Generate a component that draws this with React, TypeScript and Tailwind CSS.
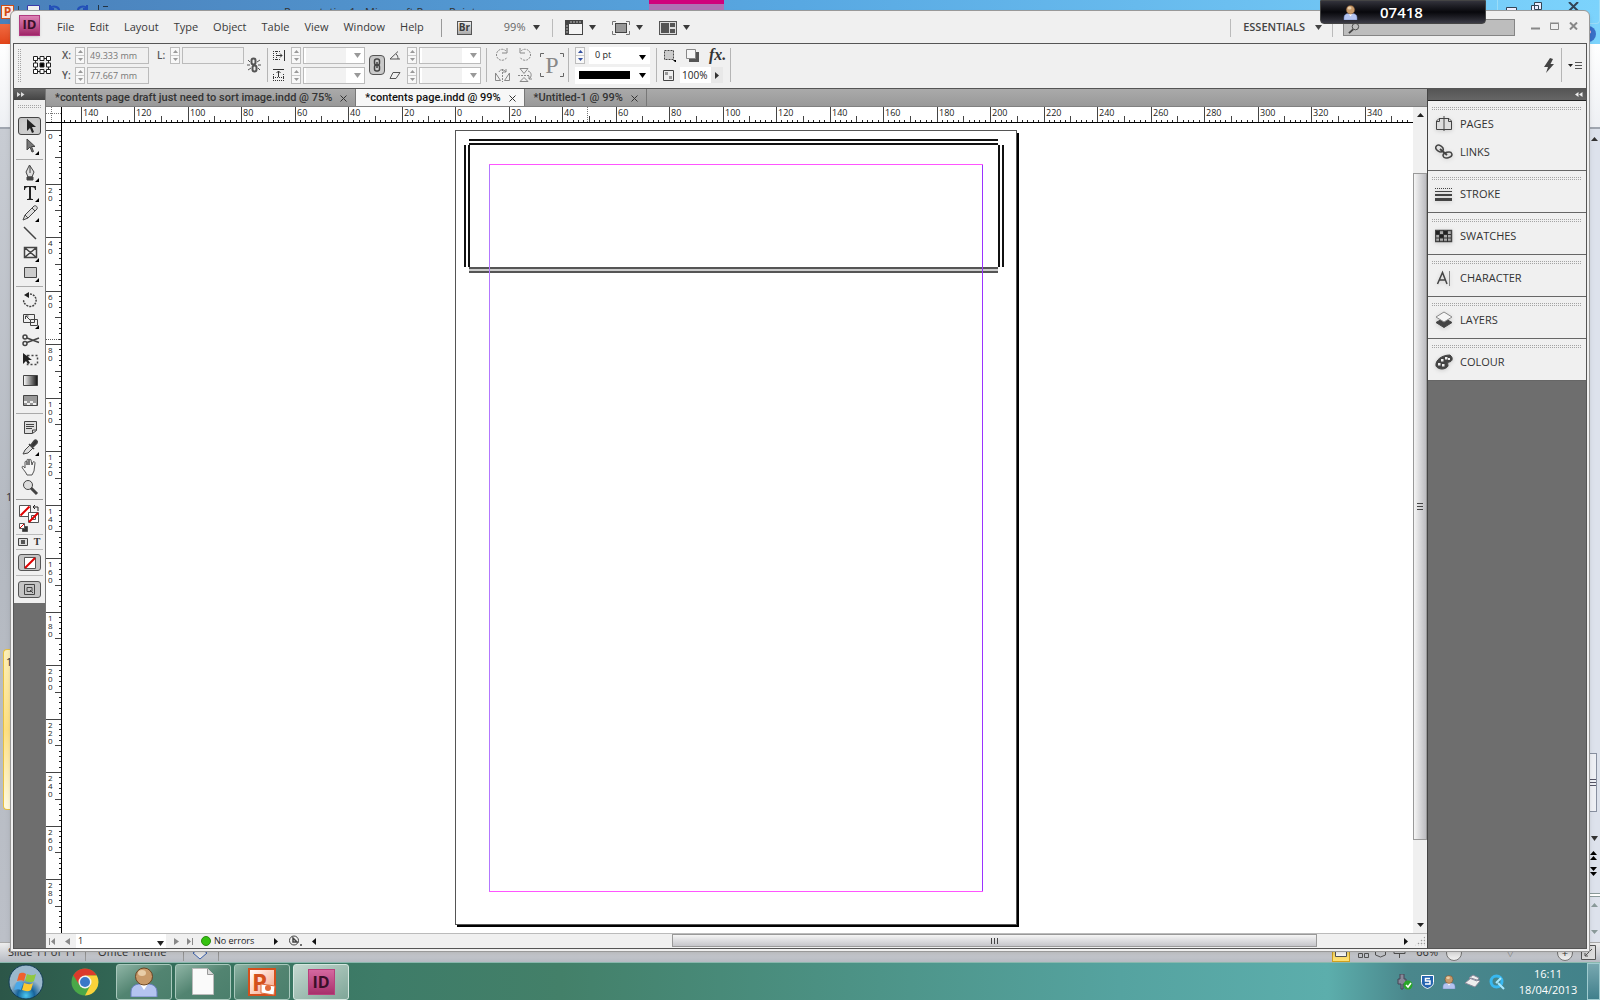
import type { ReactNode } from "react";

const menus = ["File", "Edit", "Layout", "Type", "Object", "Table", "View", "Window", "Help"];

const documents = [
  { name: "*contents page draft just need to sort image.indd @ 75%", active: false },
  { name: "*contents page.indd @ 99%", active: true },
  { name: "*Untitled-1 @ 99%", active: false },
];

// Distance between two labelled ruler marks (20 mm at 99%)
const STEP = 53.5;

const Caret = ({ className = "" }: { className?: string }) => (
  <svg width="7" height="5" viewBox="0 0 7 5" className={`shrink-0 ${className}`} fill="currentColor">
    <path d="M0 0h7L3.500 5z" />
  </svg>
);

const Grip = ({ className = "h-1" }: { className?: string }) => (
  <div className={`bg-[linear-gradient(#f0f0f0_1px,transparent_1px),linear-gradient(90deg,#a4a4a4_1px,transparent_1px)] bg-[length:2px_2px] ${className}`} />
);

const MenuBar = () => (
  <header className="flex h-8 shrink-0 items-center pl-1.5 pr-1 pt-px text-[#3a3a3a]">
    <div className="mb-1 flex h-[21px] w-[21px] shrink-0 items-center justify-center border border-[#b03a80] bg-gradient-to-b from-[#dd82b6] to-[#a02468] pb-0.5 text-[13px] font-bold text-[#3a1029] shadow">
      ID
    </div>
    <nav className="ml-[17px] flex gap-[15px] text-[11px]">
      {menus.map((m) => (
        <button key={m}>{m}</button>
      ))}
    </nav>
    <div className="ml-[17px] h-[18px] w-px bg-[#999]" />
    <button className="ml-[15px] flex h-[14px] w-[15px] items-center justify-center border border-[#555] bg-gradient-to-b from-[#eee] to-[#aaa] text-[10px] font-bold">
      Br
    </button>
    <button className="ml-8 flex items-center gap-[7px] text-[11px]">
      <span className="text-[#666]">99%</span> <Caret />
    </button>
    <div className="ml-3 h-[18px] w-px bg-[#bbb]" />
    <button className="ml-3 flex items-center gap-1.5" aria-label="View options">
      <svg width="18" height="15" viewBox="0 0 18 15">
        <rect x="0.5" y="0.5" width="17" height="14" fill="#f4f4f4" stroke="#444" />
        <path d="M0 0h18v4H4v11H0z" fill="#444" />
        <path d="M6 1v2M9 1v2M12 1v2M15 1v2M1 6h2M1 9h2M1 12h2" stroke="#bbb" />
      </svg>
      <Caret />
    </button>
    <button className="ml-4 flex items-center gap-1.5" aria-label="Screen mode">
      <svg width="18" height="14" viewBox="0 0 18 14" fill="none">
        <path d="M0.500 4V0.500H4M14 0.500h3.500V4M17.500 10v3.500H14M4 13.500H0.500V10" stroke="#777" />
        <rect x="3.500" y="2.500" width="11" height="9" fill="#999" stroke="#444" />
      </svg>
      <Caret />
    </button>
    <button className="ml-4 flex items-center gap-1.5" aria-label="Arrange documents">
      <svg width="18" height="14" viewBox="0 0 18 14">
        <rect x="0.5" y="0.5" width="17" height="13" fill="#ddd" stroke="#555" />
        <path d="M2 2h8v10H2zM11 2h5v4h-5zM11 8h5v4h-5z" fill="#555" />
      </svg>
      <Caret />
    </button>
    <div className="ml-auto h-[18px] w-px bg-[#bbb]" />
    <button className="ml-3 flex items-center gap-2.5 text-[11px] font-semibold text-[#444]">
      ESSENTIALS <Caret />
    </button>
    <div className="ml-2.5 h-[18px] w-px bg-[#bbb]" />
    <label className="ml-2.5 flex h-[17px] w-[172px] items-center border border-[#858585] bg-[#bdbdbd] pl-1">
      <svg width="13" height="12" viewBox="0 0 13 12" fill="none" stroke="#444">
        <circle cx="8" cy="4.500" r="3.500" />
        <path d="M5.500 7.500 1 11.500" strokeWidth="2" />
      </svg>
      <input aria-label="Search" className="w-full bg-transparent text-xs outline-none" />
    </label>
    <div className="ml-4 flex gap-2.5 pb-1 pr-[5px] text-[#888]">
      <button aria-label="Minimize">
        <svg width="9" height="8" stroke="currentColor"><path d="M0 6.500h9" strokeWidth="2" /></svg>
      </button>
      <button aria-label="Maximize">
        <svg width="9" height="8" stroke="currentColor" fill="none"><path d="M0.500 1.500h8v6h-8zM0 1h9" /></svg>
      </button>
      <button aria-label="Close">
        <svg width="9" height="8" stroke="currentColor" strokeWidth="2"><path d="M1 0.500 8 7.500M8 0.500 1 7.500" /></svg>
      </button>
    </div>
  </header>
);

const Spinner = ({ label, blue }: { label: string; blue?: boolean }) => (
  <div className={`flex h-[17px] w-[10px] shrink-0 flex-col border border-[#bdbdbd] bg-[#f8f8f8] ${blue ? "text-[#3350a0]" : "text-[#999]"}`}>
    <button aria-label={`Increase ${label}`} className="flex flex-1 items-center justify-center border-b border-[#ccc]">
      <svg width="5" height="3" fill="currentColor"><path d="M0 3h5L2.500 0z" /></svg>
    </button>
    <button aria-label={`Decrease ${label}`} className="flex flex-1 items-center justify-center">
      <svg width="5" height="3" fill="currentColor"><path d="M0 0h5L2.500 3z" /></svg>
    </button>
  </div>
);

const Field = ({ id, label, value }: { id: string; label: string; value: string }) => (
  <div className="flex items-center gap-0.5">
    <label htmlFor={id} className="w-[11px] text-[10px] font-semibold text-[#555]">{label}</label>
    <Spinner label={id} />
    <input
      id={id}
      defaultValue={value}
      className="h-[17px] w-[62px] border border-[#bbb] bg-[#f0f0f0] px-0.5 text-[9px] text-[#777] outline-none"
    />
  </div>
);

const Combo = ({ label }: { label: string }) => (
  <div className="flex items-center gap-0.5">
    <Spinner label={label} />
    <div className="relative">
      <select aria-label={label} className="block h-[17px] w-[62px] appearance-none border border-[#bbb] bg-[linear-gradient(90deg,#fff_2px,#f2f2f2_2px,#f2f2f2_42px,#fff_42px)]" />
      <Caret className="pointer-events-none absolute right-1 top-1.5 text-[#999]" />
    </div>
  </div>
);

const Divider = () => <div className="h-[34px] w-px shrink-0 bg-[#b5b5b5]" />;

const ControlBar = () => (
  <div className="flex h-[45px] shrink-0 items-center border-b border-[#555] pb-0.5 pl-1 pr-1">
    <Grip className="h-[34px] w-1" />
    <svg width="18" height="18" viewBox="0 0 18 18" className="ml-[11px] shrink-0" fill="#fff" stroke="#222">
      <path d="M2 2.500h14M2 15.500h14M2.500 2v14M15.500 2v14" />
      <path d="M0.500 0.500h4v4h-4zM7 0.500h4v4H7zM13.500 0.500h4v4h-4zM0.500 7h4v4h-4zM13.500 7h4v4h-4zM0.500 13.500h4v4h-4zM7 13.500h4v4H7zM13.500 13.500h4v4h-4z" />
      <path d="M7 7h4v4H7z" fill="#000" />
    </svg>
    <div className="ml-[11px] flex flex-col gap-[3px]">
      <Field id="X" label="X:" value="49.333 mm" />
      <Field id="Y" label="Y:" value="77.667 mm" />
    </div>
    <div className="ml-2 flex h-[37px] items-start">
      <Field id="L" label="L:" value="" />
    </div>
    <svg width="14" height="16" viewBox="0 0 14 16" className="ml-[3px] shrink-0" fill="none" stroke="#555">
      <rect x="4.500" y="1.500" width="4" height="6" rx="2" strokeWidth="2" />
      <rect x="5.500" y="8.500" width="4" height="6" rx="2" strokeWidth="2" />
      <path d="M1 3l2 2M13 3l-3 2M0 8h3M11 8h3M1 13l3-2M13 13l-2-2" />
    </svg>
    <div className="ml-1.5"><Divider /></div>
    <div className="ml-1 flex flex-col gap-[7px]">
      <svg width="13" height="13" viewBox="0 0 13 13" fill="none" stroke="#333">
        <path d="M1 2.500h7M1 10.500h7M1.500 2v9M4.500 2v9" strokeDasharray="1 1" />
        <path d="M12.500 1v11M5 6.500h5M8 4.500l2 2-2 2" />
      </svg>
      <svg width="13" height="13" viewBox="0 0 13 13" fill="none" stroke="#333">
        <path d="M1 8.500h11M1 11.500h11M1.500 5v8M11.500 5v8" strokeDasharray="1 1" />
        <path d="M1 0.500h11M6.500 8V2M4.500 4l2-2 2 2" />
      </svg>
    </div>
    <div className="ml-1.5 flex flex-col gap-[3px]">
      <Combo label="Scale X" />
      <Combo label="Scale Y" />
    </div>
    <button aria-label="Constrain proportions" className="ml-1 flex h-5 w-4 items-center justify-center rounded-sm border border-[#555] bg-[#ccc] shadow-inner">
      <svg width="8" height="14" viewBox="0 0 8 14" fill="none" stroke="#444" strokeWidth="1.500">
        <rect x="1.500" y="1" width="5" height="6" rx="2" />
        <rect x="1.500" y="7" width="5" height="6" rx="2" />
        <path d="M4 4v6" />
      </svg>
    </button>
    <div className="ml-1 flex flex-col gap-[11px]">
      <svg width="12" height="9" fill="none" stroke="#555"><path d="M9 0.500 1 8h10M7 3c1.500 1 2 3 2 5" /></svg>
      <svg width="12" height="9" fill="none" stroke="#555"><path d="M4 1.500h7L7 7.500H1z" /></svg>
    </div>
    <div className="ml-1.5 flex flex-col gap-[3px]">
      <Combo label="Rotation" />
      <Combo label="Shear" />
    </div>
    <div className="ml-[5px]"><Divider /></div>
    <div className="ml-2 grid grid-cols-2 gap-x-2 gap-y-1.5">
      <button aria-label="Rotate 90 clockwise">
        <svg width="14" height="14" fill="none" stroke="#888"><path d="M11 3A5.500 5.500 0 1 0 12 9" strokeDasharray="2 1" /><path d="M12 0v5H7" /></svg>
      </button>
      <button aria-label="Rotate 90 anticlockwise">
        <svg width="14" height="14" fill="none" stroke="#888"><path d="M3 3A5.500 5.500 0 1 1 2 9" strokeDasharray="2 1" /><path d="M2 0v5h5" /></svg>
      </button>
      <button aria-label="Flip horizontal">
        <svg width="15" height="14" fill="none" stroke="#888"><path d="M7.500 1v13" strokeDasharray="2 1" /><path d="M0.500 12.500V5l5 7.500zM14.500 12.500V5l-5 7.500zM4 4c1-3 5-3 7 0M11 1v3H8" /></svg>
      </button>
      <button aria-label="Flip vertical">
        <svg width="15" height="14" fill="none" stroke="#888"><path d="M0 7.500h12" strokeDasharray="2 1" /><path d="M2 0.500h8L6 5.500zM2 13.500h8L6 9.500zM10 3c4 1 4 6 1 8M11 8v3h3" /></svg>
      </button>
    </div>
    <div className="relative ml-[7px] h-6 w-6 text-center font-['Liberation_Serif',serif] text-2xl leading-6 text-[#888]">
      P
      <svg width="24" height="24" className="absolute inset-0" fill="none" stroke="#666"><path d="M0.500 4V0.500H4M20 0.500h3.500V4M23.500 20v3.500H20M4 23.500H0.500V20" /></svg>
    </div>
    <div className="ml-1"><Divider /></div>
    <div className="ml-1.5 flex flex-col gap-[3px]">
      <div className="flex items-center gap-1">
        <Spinner label="stroke weight" blue />
        <div className="relative">
          <select aria-label="Stroke weight" className="block h-[17px] w-[61px] appearance-none bg-white pl-1.5 text-[9px] text-[#222]">
            <option>0 pt</option>
          </select>
          <Caret className="pointer-events-none absolute right-1 top-2" />
        </div>
      </div>
      <button aria-label="Stroke type" className="flex h-[17px] w-[75px] items-center gap-[9px] bg-white pl-1">
        <span className="h-2 w-[51px] bg-black" />
        <Caret />
      </button>
    </div>
    <div className="ml-1.5"><Divider /></div>
    <div className="ml-1.5 flex flex-col gap-1">
      <div className="flex h-4 items-center gap-2.5">
        <svg width="13" height="13" fill="#ccc" stroke="#444"><path d="M1.500 1.500h9v9h-9z" strokeDasharray="2 1" /><path d="M10 11h3v2h-1z" fill="#000" stroke="none" /></svg>
        <svg width="13" height="13"><path d="M3 3h10v10H3z" fill="#555" /><path d="M0.500 0.500h9v9h-9z" fill="#f6f6f6" stroke="#888" /></svg>
        <button className="font-['Liberation_Serif',serif] text-base font-bold italic leading-4 text-[#333]">fx.</button>
      </div>
      <div className="flex h-4 items-center">
        <svg width="11" height="11"><path d="M0.500 0.500h10v10h-10z" fill="#eee" stroke="#444" /><path d="M2 2h3v3H2zM6 6h3v3H6z" fill="#999" /></svg>
        <input aria-label="Opacity" defaultValue="100%" className="ml-1.5 h-4 w-[31px] bg-white px-0.5 text-[10px] text-[#222] outline-none" />
        <button aria-label="Opacity slider" className="flex h-4 w-3 items-center justify-center bg-[#e8e8e8]">
          <svg width="4" height="7"><path d="M0 0v7l4-3.500z" fill="#333" /></svg>
        </button>
      </div>
    </div>
    <div className="ml-1"><Divider /></div>
    <button aria-label="Quick apply" className="ml-auto">
      <svg width="11" height="15" fill="#444"><path d="M6 0 0 9h4L2 15l8-9H6.500L9 1z" /></svg>
    </button>
    <div className="ml-1.5"><Divider /></div>
    <button aria-label="Panel menu" className="ml-1.5 flex items-center">
      <svg width="14" height="9"><path d="M0 3h5L2.500 6z" fill="#222" /><path d="M7 1.500h7M7 4.500h7M7 7.500h7" stroke="#555" /></svg>
    </button>
  </div>
);

const Corner = () => <path d="M19 15v4h-4z" fill="#000" stroke="none" />;

const Tool = ({ name, children, pressed }: { name: string; children: ReactNode; pressed?: boolean }) => (
  <button
    aria-label={name}
    className={`mx-auto flex w-[23px] items-center justify-center ${pressed ? "my-px h-[18px] rounded-[3px] border border-[#444] bg-[#ccc] shadow-inner" : "h-5"}`}
  >
    <svg width="20" height="20" viewBox="0 0 20 20" className="shrink-0" fill="none" stroke="#444">
      {children}
    </svg>
  </button>
);

const ToolRule = () => (
  <div className="flex h-[7px] items-center px-0.5">
    <div className="h-px w-full bg-[#aaa]" />
  </div>
);

const Toolbox = () => (
  <aside className="flex w-8 shrink-0 flex-col border-r border-[#777] bg-[#6e6e6e]">
    <button aria-label="Expand tools" className="flex h-[11px] shrink-0 items-center bg-gradient-to-b from-[#666] to-[#444] pl-[3px]">
      <svg width="8" height="5" fill="#ddd"><path d="M0 0l3.500 2.500L0 5zM4 0l3.500 2.500L4 5z" /></svg>
    </button>
    <div className="flex flex-col bg-[#f0f0f0]">
      <div className="px-1 pb-2 pt-1"><Grip /></div>
      <Tool name="Selection" pressed><path d="M7 3v12l3-3 2 5 2-1-2-5h4z" fill="#222" stroke="none" /></Tool>
      <Tool name="Direct selection"><path d="M7 3v11l3-3 2 5 1.500-.5-2-5h3.500z" fill="#777" /><Corner /></Tool>
      <ToolRule />
      <Tool name="Pen"><path d="M9.500 2 6 9l2 5h4l2-5zM10 3v7" fill="#ddd" /><path d="M7 14h6v3H7z" fill="#444" /><Corner /></Tool>
      <Tool name="Type"><path d="M4 3h12v4h-1c0-2-1-3-4-3v11c0 1 1 1 2 1v1H7v-1c1 0 2 0 2-1V4C6 4 5 5 5 7H4z" fill="#222" stroke="none" /><Corner /></Tool>
      <Tool name="Pencil"><path d="M3 17l2-5 9-9c2-1 4 1 3 3l-9 9zM5 12l3 3M12 5l3 3" fill="#ddd" /><Corner /></Tool>
      <Tool name="Line"><path d="M4 4l12 12" strokeWidth="1.500" /></Tool>
      <Tool name="Rectangle frame"><path d="M4.500 4.500h12v10h-12zM4.500 4.500l12 10M16.500 4.500l-12 10" strokeWidth="1.500" /><Corner /></Tool>
      <Tool name="Rectangle"><path d="M4.500 4.500h12v10h-12z" fill="#ccc" /><Corner /></Tool>
      <ToolRule />
      <Tool name="Rotate"><path d="M7 4.500c5-2 10 2 9 7s-6 6-9 4-4-4-3-6" strokeWidth="1.500" strokeDasharray="2 1" /><path d="M4 5l5-3v6z" fill="#222" stroke="none" /></Tool>
      <Tool name="Scale"><path d="M3.500 4.500h11v8h-11zM10.500 9.500h7v6h-7z" /><path d="M6 6l5 5M5.500 9V6h3" /><Corner /></Tool>
      <Tool name="Scissors"><circle cx="5" cy="7" r="2" strokeWidth="1.500" /><circle cx="5" cy="13.500" r="2" strokeWidth="1.500" /><path d="M7 8l12 4.500M7 12.500 19 8" strokeWidth="1.500" /></Tool>
      <Tool name="Free transform"><path d="M7.500 5.500h10v9h-10z" strokeDasharray="2 2" strokeWidth="1.500" /><path d="M3 3v11l3-3 2 3 2-1-2-3h4z" fill="#222" stroke="none" /></Tool>
      <Tool name="Gradient swatch">
        <defs><linearGradient id="swatch"><stop stopColor="#fff" /><stop offset="1" stopColor="#111" /></linearGradient></defs>
        <path d="M3.500 5.500h14v10h-14z" fill="url(#swatch)" />
      </Tool>
      <Tool name="Gradient feather"><path d="M3.500 5.500h14v10h-14z" fill="#999" /><path d="M4 11h3v2H4zM10 11h3v2h-3zM7 13h3v2H7zM13 13h3v2h-3z" fill="#eee" stroke="none" /></Tool>
      <ToolRule />
      <Tool name="Note"><path d="M4.500 4.500h12v9l-4 3h-8z" fill="#ddd" /><path d="M6 7.500h8M6 9.500h8M6 11.500h6M12.500 16v-3h4" /></Tool>
      <Tool name="Eyedropper"><path d="M3 17l2-4 5-5 3 3-5 5z" fill="#ddd" /><path d="M9 7l5 5M11 8l3-4c2-2 4 0 3 2l-4 4z" fill="#333" strokeWidth="1.500" /><Corner /></Tool>
      <Tool name="Hand"><path d="M6 16c-2-3-4-5-4-6s2-1 3 1V5c0-1 2-1 2 0v3-5c0-1 2-1 2 0v5-5c0-1 2-1 2 0l1 5 1-3c1-1 2 0 2 1l-1 8-2 4H7z" fill="#f4f4f4" stroke="#555" /></Tool>
      <Tool name="Zoom"><circle cx="8" cy="8" r="4.500" fill="#ddd" /><path d="M11 11l6 6" strokeWidth="3" /></Tool>
      <div className="mx-0.5 mt-0.5 h-px bg-[#999]" />
      <svg width="30" height="34" viewBox="0 0 30 34" fill="#fff" stroke="#555">
        <path d="M5.500 5.500h11v11h-11z" />
        <path d="M6.500 15.500l9-9" stroke="#e00000" strokeWidth="2" />
        <path d="M14.500 12.500h10v10h-10zM17.500 15.500h4v4h-4z" />
        <path d="M15 22l9-9" stroke="#e00000" strokeWidth="2" />
        <path d="M20 7h4v4M21 5l-2 2 2 2" fill="none" stroke="#222" />
        <path d="M8.500 26.500h5v5h-5z" fill="#333" />
        <path d="M5.500 23.500h5v5h-5z" />
        <path d="M6 28l4-4" stroke="#e00000" />
      </svg>
      <div className="mx-0.5 h-px bg-[#bbb]" />
      <div className="flex h-[14px] items-center justify-center gap-1">
        <button aria-label="Formatting affects container"><svg width="11" height="8"><path d="M0.500 0.500h9v7h-9z" fill="#ddd" stroke="#444" /><path d="M3 2h4v4H3z" fill="#555" /></svg></button>
        <button className="w-2 font-['Liberation_Serif',serif] text-[10px] font-bold leading-3 text-[#333]">T</button>
      </div>
      <div className="mx-0.5 h-px bg-[#bbb]" />
      <button aria-label="Apply none" className="mx-auto my-1 flex h-[17px] w-[23px] items-center justify-center rounded-[3px] border border-[#555] bg-[#c4c4c4]">
        <svg width="12" height="12"><path d="M0.500 0.500h11v11h-11z" fill="#fff" stroke="#555" /><path d="M1 11 11 1" stroke="#e00000" strokeWidth="2" /></svg>
      </button>
      <div className="mx-0.5 h-px bg-[#bbb]" />
      <button aria-label="Normal view mode" className="mx-auto mb-[5px] mt-[5px] flex h-[17px] w-[23px] items-center justify-center rounded-[3px] border border-[#555] bg-[#c4c4c4]">
        <svg width="11" height="11" fill="none" stroke="#444"><path d="M0.500 0.500h10v10h-10zM3 3.500h5v4H3zM6 6l3 3" /></svg>
      </button>
    </div>
  </aside>
);

const steps = (from: number, to: number) => Array.from({ length: to - from + 1 }, (_, i) => from + i);

const tickLength = (i: number) => (i % 10 === 0 ? 15 : i % 5 === 0 ? 6 : 2);

const HorizontalRuler = () => (
  <svg className="h-4 min-w-0 flex-1 bg-white" shapeRendering="crispEdges">
    {steps(-73, 178).map((i) => {
      const x = Math.round(393 + (i * STEP) / 10);
      return <path key={i} d={`M${x}.5 ${15 - tickLength(i)}V15`} stroke={i % 5 === 0 ? "#444" : "#222"} />;
    })}
    {steps(-7, 17).map((i) => (
      <text key={i} x={Math.round(395 + i * STEP)} y="9" className="text-[9px]" fill="#222">
        {Math.abs(i * 20)}
      </text>
    ))}
    <path d="M525.5 0v15" stroke="#777" strokeDasharray="1 1" />
    <path d="M0 15.500h3000" stroke="#000" />
  </svg>
);

const VerticalRuler = () => (
  <svg className="h-full w-4 shrink-0 bg-white" shapeRendering="crispEdges">
    {steps(0, 151).map((i) => {
      const y = Math.round(7 + (i * STEP) / 10);
      return <path key={i} d={`M${15 - tickLength(i)} ${y}.5H15`} stroke={i % 5 === 0 ? "#444" : "#222"} />;
    })}
    {steps(0, 14).map((i) =>
      String(i * 20).split("").map((digit, n) => (
        <text key={`${i}-${n}`} x="2" y={Math.round(16 + i * STEP + n * 8)} className="text-[8px]" fill="#222">
          {digit}
        </text>
      ))
    )}
    <path d="M0 216.500h15" stroke="#555" strokeDasharray="1 1" />
    <path d="M15.500 0v3000" stroke="#000" />
  </svg>
);

const Artboard = () => (
  <svg className="h-full min-w-0 flex-1 bg-white" shapeRendering="crispEdges" fill="none">
    <path d="M395 803h562M956 10v794" stroke="#000" strokeWidth="2" />
    <path d="M393.500 7.500h561v794h-561z" fill="#fff" stroke="#555" />
    {/* Double line masthead frame */}
    <path d="M407 17h529M407 21h529M403 22v122M407 22v122M937 22v122M941 22v122" stroke="#111" strokeWidth="2" />
    <path d="M407 145h529M407 149h529" stroke="#555" strokeWidth="2" />
    <path d="M407 147h529" stroke="#ccc" strokeWidth="2" />
    {/* Margin guides */}
    <path d="M427 41.500h494M427 768.500h494" stroke="#ff55ff" />
    <path d="M427.500 42v726" stroke="#b377ff" />
    <path d="M920.500 42v726" stroke="#9933ff" />
  </svg>
);

const StatusBar = () => (
  <footer className="flex h-[15px] shrink-0 items-center border-t border-[#bbb] bg-[#f0f0f0] text-[9px] text-[#222]">
    <button aria-label="First page" className="ml-[3px]"><svg width="6" height="7" fill="#888"><path d="M0 0h1v7H0zM6 0v7L2 3.500z" /></svg></button>
    <button aria-label="Previous page" className="ml-2.5"><svg width="5" height="7" fill="#888"><path d="M5 0v7L0 3.500z" /></svg></button>
    <div className="relative ml-1.5">
      <select aria-label="Page" className="block h-[14px] w-[90px] appearance-none bg-white pl-0.5">
        <option>1</option>
      </select>
      <Caret className="pointer-events-none absolute bottom-0.5 right-0.5" />
    </div>
    <button aria-label="Next page" className="ml-2"><svg width="5" height="7" fill="#888"><path d="M0 0v7l5-3.500z" /></svg></button>
    <button aria-label="Last page" className="ml-2"><svg width="6" height="7" fill="#888"><path d="M0 0v7l4-3.500zM5 0h1v7H5z" /></svg></button>
    <span className="ml-2 h-2.5 w-2.5 rounded-full border border-[#2a8a10] bg-[#35c210]" />
    <button className="ml-[3px] w-[60px] text-left">No errors</button>
    <svg width="4" height="7"><path d="M0 0v7l4-3.500z" fill="#111" /></svg>
    <svg width="14" height="12" className="ml-2.5" fill="none" stroke="#444"><circle cx="6" cy="5.500" r="4.500" /><path d="M5 3v4h4l-4-4zM12 10h2" strokeWidth="1.500" /></svg>
    <button aria-label="Scroll left" className="ml-1 flex h-full w-4 items-center justify-center">
      <svg width="4" height="7"><path d="M4 0v7L0 3.500z" fill="#111" /></svg>
    </button>
    <div className="flex h-full flex-1">
      <div className="flex-[350]" />
      <div className="flex h-[13px] flex-[643] items-center justify-center gap-0.5 border border-[#999] bg-gradient-to-b from-[#f5f5f5] to-[#c5c5ca]">
        <i className="h-1.5 w-px bg-[#444]" />
        <i className="h-1.5 w-px bg-[#444]" />
        <i className="h-1.5 w-px bg-[#444]" />
      </div>
      <div className="flex-[81]" />
    </div>
    <button aria-label="Scroll right" className="flex h-full w-4 items-center justify-center">
      <svg width="4" height="7"><path d="M0 0v7l4-3.500z" fill="#111" /></svg>
    </button>
    <div className="mr-0.5 h-[10px] w-[11px] bg-[radial-gradient(#999_35%,transparent_50%)] bg-[length:3px_3px] [clip-path:polygon(100%_0,100%_100%,0_100%)]" />
  </footer>
);

const VerticalScroll = () => (
  <div className="flex w-[14px] shrink-0 flex-col bg-[#f0f0f0]">
    <button aria-label="Scroll up" className="flex h-4 items-center justify-center"><svg width="7" height="4"><path d="M0 4h7L3.500 0z" fill="#222" /></svg></button>
    <div className="flex flex-1 flex-col">
      <div className="flex-[50]" />
      <div className="flex flex-[668] flex-col items-center justify-center gap-0.5 border border-[#999] bg-gradient-to-r from-[#f5f5f5] to-[#bcbcc0]">
        <i className="h-px w-1.5 bg-[#444]" />
        <i className="h-px w-1.5 bg-[#444]" />
        <i className="h-px w-1.5 bg-[#444]" />
      </div>
      <div className="flex-[77]" />
    </div>
    <button aria-label="Scroll down" className="flex h-4 items-center justify-center"><svg width="7" height="4"><path d="M0 0h7L3.500 4z" fill="#222" /></svg></button>
  </div>
);

const DocumentArea = () => (
  <main className="flex min-w-0 flex-1 flex-col">
    <div className="flex h-[18px] shrink-0 border-b border-[#808080] bg-gradient-to-b from-[#aaa] to-[#999] font-['Roboto',sans-serif] text-[11px] font-medium text-[#333]">
      {documents.map((doc) => (
        <div
          key={doc.name}
          className={`flex items-center gap-2 border-r border-[#777] pl-[9px] pr-2 pt-0.5 ${doc.active ? "bg-[#f7f7f7] text-[#111]" : ""}`}
        >
          <button className="whitespace-nowrap">{doc.name}</button>
          <button aria-label={`Close ${doc.name}`}>
            <svg width="7" height="7" stroke="#333"><path d="M0.500 0.500l6 6M6.500 0.500l-6 6" /></svg>
          </button>
        </div>
      ))}
    </div>
    <div className="flex min-h-0 flex-1">
      <div className="flex min-w-0 flex-1 flex-col">
        <div className="flex shrink-0">
          <svg width="16" height="16" className="shrink-0 bg-white" stroke="#777"><path d="M0 6.500h15M5.500 0v15" strokeDasharray="1 1" /><path d="M15.500 0v16M0 15.500h16" stroke="#000" /></svg>
          <HorizontalRuler />
        </div>
        <div className="flex min-h-0 flex-1">
          <VerticalRuler />
          <Artboard />
        </div>
      </div>
      <VerticalScroll />
    </div>
    <StatusBar />
  </main>
);

const panelGroups: { name: string; icon: ReactNode }[][] = [
  [
    { name: "PAGES", icon: <path d="M9 1v15M9 3.500H4L1.500 6v8.500H9M9 3.500h5L16.500 6v8.500H9M4.500 3.500v3h-3M13.500 3.500v3h3" fill="#ddd" /> },
    { name: "LINKS", icon: <g strokeWidth="1.500"><ellipse cx="4.500" cy="5.500" rx="4" ry="2.800" transform="rotate(35 4.500 5.500)" /><ellipse cx="12.500" cy="12" rx="4.500" ry="2.800" transform="rotate(-15 12.500 12)" /><path d="M5 6l7 6" strokeWidth="2" /></g> },
  ],
  [{ name: "STROKE", icon: <g><path d="M0 3.500h17" strokeDasharray="1 1" /><path d="M0 6.500h17" /><path d="M0 10h17" strokeWidth="2" /><path d="M0 14.500h17" strokeWidth="3" /></g> }],
  [{ name: "SWATCHES", icon: <g><path d="M0.500 3.500h16v11h-16z" fill="#aaa" strokeWidth="1.500" /><path d="M1 4h4v4H1zM9 4h4v4H9zM5 8h4v3H5z" fill="#222" stroke="none" /><path d="M1 7.500h15M1 11h15M4.500 3v12M8.500 3v12M12.500 3v12" stroke="#333" /></g> }],
  [{ name: "CHARACTER", icon: <g><path d="M2.500 15 7.500 3.500l4.500 11.500M4.500 11h6" strokeWidth="1.500" /><path d="M14.500 2v15" stroke="#888" /></g> }],
  [{ name: "LAYERS", icon: <g><path d="M9 7l8 4.500-8 5-8-5z" fill="#444" /><path d="M9 1l8 5-8 5-8-5z" fill="#f5f5f5" stroke="#888" /></g> }],
  [{ name: "COLOUR", icon: <g><path d="M15 2c4 3 2 7-1 7-2 0-1 2-1 4-2 4-10 4-12 0C0 7 7 2 15 2z" fill="#444" /><path d="M6 6h2.500v2.500H6zM10 4h2.500v2.500H10zM3 10h2.500v2.500H3zM7 11h2.500v2.500H7zM13 5h2v2h-2z" fill="#eee" stroke="none" /></g> }],
];

const PanelDock = () => (
  <aside className="flex w-[159px] shrink-0 flex-col border-l border-[#444] bg-[#6e6e6e]">
    <button aria-label="Collapse panels" className="flex h-3 shrink-0 items-center justify-end border-b border-[#222] bg-gradient-to-b from-[#555] to-[#666] pr-[3px]">
      <svg width="8" height="5" fill="#eee"><path d="M3.500 0v5L0 2.500zM7.500 0v5L4 2.500z" /></svg>
    </button>
    {panelGroups.map((group) => (
      <section key={group[0].name} className="border-b border-[#666] bg-[#f0f0f0] px-1 pb-1 pt-[5px]">
        <Grip />
        {group.map((panel) => (
          <button key={panel.name} className="flex h-7 w-full items-center gap-[7px] pl-[3px] text-[11px] font-medium text-[#333]">
            <svg width="18" height="18" viewBox="0 0 18 18" fill="none" stroke="#444" className="drop-shadow-sm">{panel.icon}</svg>
            {panel.name}
          </button>
        ))}
      </section>
    ))}
  </aside>
);

const Presentation = () => (
  <div className="flex min-h-0 flex-1 flex-col bg-[#dde2eb] text-[#333]">
    <div className="flex h-6 shrink-0 items-center bg-gradient-to-r from-[#4a80ba] via-[#58a8e2] to-[#7cd3fc] text-[11px]">
      <span className="ml-px flex h-[14px] w-[13px] items-center justify-center border border-[#d05018] bg-[#fbe8df] text-xs font-bold leading-3 text-[#d04a14]">P</span>
      <span className="ml-1 h-3 w-px bg-[#345]" />
      <svg width="84" height="14" className="ml-2" fill="none"><path d="M0.500 0.500h12v12h-12z" fill="#eee" stroke="#3a3aa8" /><path d="M23 3c4-3 10-1 9 4M23 0v4h4M60 3c-4-3-10-1-9 4M60 0v4h-4" stroke="#2350b8" strokeWidth="2" /><path d="M71.500 0v12M76 1.500h5" stroke="#234" /></svg>
      <span className="ml-[173px]">Presentation1 - Microsoft PowerPoint</span>
      <span className="ml-auto flex h-full items-start gap-3.5 rounded-b border border-t-0 border-[#9adcf8] pl-2 pr-5 pt-0.5 text-[#345]">
        <svg width="11" height="9" fill="#eef" stroke="currentColor"><path d="M0.500 5.500h10v3h-10z" /></svg>
        <svg width="11" height="9" fill="#eef" stroke="currentColor"><path d="M3.500 0.500h7v7h-7zM0.500 3.500h7v5h-7z" /></svg>
        <svg width="11" height="9" className="ml-3" stroke="currentColor" strokeWidth="2"><path d="M1 0l9 9M10 0 1 9" /></svg>
      </span>
    </div>
    <div className="flex h-5 shrink-0 justify-between bg-[#7cd3fc]">
      <div className="w-3 bg-gradient-to-b from-[#f06a40] to-[#e24418]" />
      <div className="mr-1 mt-0.5 h-4 w-4 rounded-full bg-[#3a70c8] text-center text-[11px] font-bold leading-4 text-white">?</div>
    </div>
    <div className="h-[85px] shrink-0 border-b-2 border-[#a0a6b0] bg-gradient-to-b from-white to-[#eef0f4]" />
    <div className="flex min-h-0 flex-1 justify-between">
      <div className="flex w-3 flex-col bg-gradient-to-b from-[#c8ccd3] via-[#b4b9c1] to-[#bcc0c8] pt-[360px] text-[11px]">
        <span className="pl-1.5">1</span>
        <div className="ml-[3px] mt-[143px] h-[161px] rounded-l-sm border border-r-0 border-[#e8c040] bg-gradient-to-b from-[#fdf0b8] via-[#ffe080] to-[#fffbe0] pl-0.5 pt-1">1</div>
      </div>
      <div className="flex w-3 flex-col items-center bg-[#dde2ec] text-[#333]">
        <svg width="7" height="4" className="mt-2" fill="currentColor"><path d="M0 4h7L3.500 0z" /></svg>
        <div className="mt-[612px] flex h-[59px] w-[9px] flex-col items-center justify-center gap-0.5 self-start border border-[#8890a0] bg-[#eef0f5]">
          <i className="h-px w-1.5 bg-[#556]" />
          <i className="h-px w-1.5 bg-[#556]" />
          <i className="h-px w-1.5 bg-[#556]" />
        </div>
        <Caret className="mt-6" />
        <svg width="8" height="26" className="mt-2.5" fill="#000"><path d="M0 4h7L3.500 0zM0 9h7L3.500 5zM0 16h7L3.500 20zM0 21h7L3.500 25z" /></svg>
        <div className="mt-4 h-1 w-full border-y border-[#8a9a9a] bg-white" />
        <svg width="7" height="32" className="mt-1.5" fill="#8a9a9a"><path d="M0 4h7L3.500 0zM0 27h7L3.500 31z" /></svg>
      </div>
    </div>
    <div className="flex h-5 shrink-0 items-center border-t border-[#aaa] bg-gradient-to-b from-[#eee] to-[#b6bac2] pl-2 text-[11px]">
      <span>Slide 11 of 11</span>
      <span className="ml-2 h-4 w-px bg-[#999]" />
      <span className="ml-2">"Office Theme"</span>
      <span className="ml-3 h-4 w-px bg-[#999]" />
      <svg width="16" height="14" className="ml-2"><path d="M1 7l7 6 7-6-7-5z" fill="#eee" stroke="#3b62b0" /></svg>
      <span className="ml-2.5 h-4 w-px bg-[#999]" />
      <div className="ml-auto flex items-center gap-2 pr-1">
        <span className="flex h-[18px] w-[18px] items-center justify-center border border-[#d0a020] bg-[#ffe070]"><svg width="12" height="9" fill="#fff" stroke="#555"><path d="M0.500 0.500h11v8h-11z" /></svg></span>
        <svg width="50" height="11" fill="none" stroke="#555"><path d="M0.500 0.500h4v4h-4zM6.500 0.500h4v4h-4zM0.500 6.500h4v4h-4zM6.500 6.500h4v4h-4zM17.500 1v7l5 2 5-2V1M36 1.500h11v5H36zM41.500 6v5" /></svg>
        <span>66%</span>
        <span className="h-4 w-4 rounded-full border border-[#777] bg-[#eee]" />
        <span className="w-[79px] text-center text-[#888]">▽</span>
        <span className="h-4 w-4 rounded-full border border-[#777] bg-[#eee] text-center leading-[14px]">+</span>
        <svg width="15" height="15" fill="#ddd" stroke="#555"><path d="M0.500 0.500h14v14h-14zM4 11l7-7M7 11H4V8" /></svg>
      </div>
    </div>
  </div>
);

const Person = ({ size }: { size: number }) => (
  <svg width={size} height={size} viewBox="0 0 30 30">
    <path d="M2 30v-5c0-6 5-8 9-8h8c4 0 9 2 9 8v5z" fill="#b4c4f0" stroke="#6a80c0" />
    <path d="M11 17h8l-4 6z" fill="#fff" />
    <circle cx="15" cy="9.500" r="8.500" fill="#c89a6a" stroke="#6a4424" />
    <ellipse cx="13" cy="6" rx="4" ry="3" fill="#e8cda8" />
  </svg>
);

const TaskButton = ({ label, active, children }: { label: string; active?: boolean; children: ReactNode }) => (
  <button
    aria-label={label}
    className={`flex h-9 w-14 items-center justify-center rounded-[3px] border ${active ? "border-[#d4e6df] bg-gradient-to-br from-[#c4d8d0] to-[#7fa698]" : "border-[#a8c8bc] bg-gradient-to-br from-[#8fb5a6] via-[#528471] to-[#4b7f6c]"}`}
  >
    {children}
  </button>
);

const Taskbar = () => (
  <footer className="flex h-[38px] shrink-0 items-center border-t border-[#8ab8ae] bg-[linear-gradient(90deg,#2c5648_0%,#35705c_12%,#3e7c68_24%,#438069_35%,#4d9488_55%,#55a3a0_70%,#5caeac_83%,#4a878c_88%,#42828a_100%)]">
    <button aria-label="Start" className="ml-2">
      <svg width="36" height="36" viewBox="0 0 36 36">
        <defs><radialGradient id="orb" cy="0.900"><stop stopColor="#4cc8f0" /><stop offset="0.500" stopColor="#17649c" /><stop offset="1" stopColor="#9ab8cc" /></radialGradient></defs>
        <circle cx="18" cy="18" r="17" fill="url(#orb)" stroke="#123c55" />
        <path d="M11 10c3-2 5-1 7 0l-2 7c-2-1-4-1-7 0z" fill="#f0602c" />
        <path d="M19 10c3 1 5 2 9 0l-2 7c-3 2-6 1-9 0z" fill="#90c840" />
        <path d="M8 19c3-2 5-1 7 0l-2 7c-2-1-4-1-7 0z" fill="#4aa8e8" />
        <path d="M16 19c3 1 6 2 9 0l-2 7c-3 2-6 1-9 0z" fill="#fcc830" />
      </svg>
    </button>
    <button aria-label="Chrome" className="ml-[27px]">
      <svg width="28" height="28" viewBox="0 0 28 28">
        <circle cx="14" cy="14" r="13.500" fill="#4aa848" />
        <path d="M14 14 2.300 7.200A13.500 13.500 0 0 1 25.700 7.200L14 8z" fill="#dc3a2c" />
        <path d="M14 27.500A13.500 13.500 0 0 0 25.700 7.500H14l5.500 9.500z" fill="#fbd23a" />
        <path d="M2.300 7.200 8.500 17 14 14 14 7.500z" fill="#dc3a2c" />
        <circle cx="14" cy="14" r="6.500" fill="#f4f4f4" />
        <circle cx="14" cy="14" r="5" fill="#3a78c8" />
      </svg>
    </button>
    <div className="ml-[17px] flex items-center gap-[3px]">
      <TaskButton label="User account"><Person size={30} /></TaskButton>
      <TaskButton label="Documents">
        <svg width="22" height="27" viewBox="0 0 22 27"><path d="M0.500 0.500h15l6 6v20h-21z" fill="#fafafa" stroke="#bbb" /><path d="M15.500 0.500v6h6" fill="#ddd" stroke="#999" /></svg>
      </TaskButton>
      <TaskButton label="PowerPoint">
        <div className="relative h-7 w-7 border-2 border-[#d4501c] bg-gradient-to-br from-white to-[#f4a080] text-left text-2xl font-bold leading-6 text-[#d4501c]">
          <span className="pl-0.5">P</span>
          <svg width="16" height="14" className="absolute -bottom-0.5 -right-0.5"><path d="M1 2l14 2-1 9-13-2z" fill="#fff" stroke="#e06a3a" /><circle cx="8" cy="6" r="3" fill="#e06a3a" /></svg>
        </div>
      </TaskButton>
      <TaskButton label="InDesign" active>
        <span className="flex h-[26px] w-[27px] items-center justify-center border border-[#b8407c] bg-gradient-to-b from-[#d468a0] to-[#a8306c] text-base font-bold leading-5 text-[#3a1029]">ID</span>
      </TaskButton>
    </div>
    <div className="ml-auto flex items-center gap-2">
      <svg width="16" height="16"><path d="M3 0h4v5h2v5H6v5H4v-5H1V5h2z" fill="#889" stroke="#445" /><circle cx="11" cy="11" r="4.500" fill="#2aa52a" /><path d="M9 11l2 2 3-4" stroke="#fff" fill="none" strokeWidth="1.500" /></svg>
      <svg width="13" height="15"><path d="M0.500 1.500h12v7c0 3-3 5-6 6-3-1-6-3-6-6z" fill="#2464b0" stroke="#fff" /><path d="M9 4.500H4.500v2.500H9v3H4" stroke="#fff" fill="none" strokeWidth="1.500" /></svg>
      <Person size={14} />
      <svg width="17" height="15"><path d="M1 9l6-5 9 3-5 6zM5 4l4-3 6 3-2 3z" fill="#eee" stroke="#889" /></svg>
      <svg width="16" height="16" fill="none"><circle cx="7.500" cy="7.500" r="5.500" stroke="#38b8f0" strokeWidth="3" /><path d="M7 9l5-5M9 9l6 6" stroke="#a8e8ff" strokeWidth="2" /></svg>
    </div>
    <time className="ml-3 w-[62px] text-center text-[11px] leading-4 text-white">
      16:11
      <br />
      18/04/2013
    </time>
    <button aria-label="Show desktop" className="ml-2 h-[37px] w-[13px] border border-[#a0ccd0] bg-gradient-to-b from-[#78a8b0] to-[#40808c]" />
  </footer>
);

const App = () => (
  <div className="relative flex h-screen flex-col overflow-hidden font-['Open_Sans','Noto_Sans',sans-serif]">
    <Presentation />
    <Taskbar />

    <div className="absolute right-[876px] top-0 h-[10px] w-[75px] border-t-4 border-[#d0007c] bg-[#b070b4]" />

    {/* InDesign window */}
    <div className="absolute inset-x-[10px] bottom-[48px] top-[10px] flex flex-col rounded-t-md border border-[#999] bg-[#f0f0f0] px-0.5 pb-0.5 shadow-md">
      <MenuBar />
      <div className="flex min-h-0 flex-1 flex-col border border-[#555]">
        <ControlBar />
        <div className="flex min-h-0 flex-1">
          <Toolbox />
          <DocumentArea />
          <PanelDock />
        </div>
      </div>
    </div>

    {/* Logged on user badge */}
    <div className="absolute right-[114px] top-0 flex h-6 w-[166px] items-center rounded-b border border-[#444] bg-gradient-to-b from-[#33333c] via-[#08080c] to-[#3a3a44] pl-[22px] text-[15px] font-semibold text-white">
      <Person size={15} />
      <span className="ml-[22px]">07418</span>
    </div>
  </div>
);

export default App;
